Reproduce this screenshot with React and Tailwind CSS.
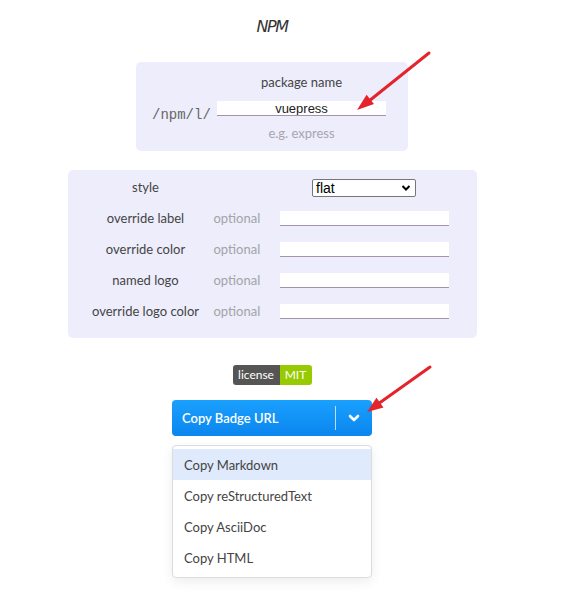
import React from 'react';

const fields = ['override label', 'override color', 'named logo', 'override logo color'];
const copyOptions = ['Copy Markdown', 'Copy reStructuredText', 'Copy AsciiDoc', 'Copy HTML'];

const App = () => {
  return (
    <div className="relative w-[566px] h-[608px] bg-white overflow-hidden font-[family-name:Lato,sans-serif]">
      <div className="w-[544px] flex flex-col items-center pt-[18px]">
        {/* TITLE */}
        <h1 className="text-[16px] leading-[18px] italic text-[#333] font-[family-name:'DejaVu_Sans',sans-serif] tracking-[-1.5px]">
          NPM
        </h1>

        {/* PATH PANEL */}
        <div className="mt-[26px] w-[272px] h-[89px] rounded-[5px] bg-[#eeedfc] flex items-start pl-[16px] pt-[10px]">
          <span className="mt-[35px] w-[58px] text-[14px] leading-[16px] text-[#666] font-[family-name:'Liberation_Mono',monospace]">
            /npm/l/
          </span>
          <div className="ml-[7px] w-[169px] flex flex-col items-center">
            <span className="text-[13px] leading-[20px] text-[#444]">package name</span>
            <input
              type="text"
              defaultValue="vuepress"
              className="block mt-[9px] w-[169px] h-[15px] bg-white border-b border-[#a592ad] text-center text-[13px] leading-[15px] text-[#222] font-[family-name:'Liberation_Sans',sans-serif] outline-none"
            />
            <span className="mt-[7px] text-[13px] leading-[20px] text-[#a6a6b0]">e.g. express</span>
          </div>
        </div>

        {/* OPTIONS PANEL */}
        <div className="mt-[19px] w-[409px] rounded-[5px] bg-[#eeedfc] pt-[2px] pb-[11px] pl-[13px]">
          <div className="grid grid-cols-[130px_69px_169px] h-[31px] items-center">
            <span className="text-center text-[13px] text-[#444]">style</span>
            <span />
            <div className="flex justify-center">
              <div className="relative w-[104px] h-[18px]">
                <select className="block appearance-none w-[104px] h-[18px] py-0 bg-white border border-[#767676] rounded-[2px] pl-[3px] text-[14px] leading-[16px] text-black font-[family-name:'Liberation_Sans',sans-serif] outline-none">
                  <option>flat</option>
                </select>
                <svg
                  className="absolute right-[5px] top-[5px] pointer-events-none"
                  width="10"
                  height="8"
                  viewBox="0 0 10 8"
                >
                  <path d="M1.5 2 L5 5.5 L8.5 2" fill="none" stroke="#000" strokeWidth="2" />
                </svg>
              </div>
            </div>
          </div>
          {fields.map((f) => (
            <div key={f} className="grid grid-cols-[130px_69px_169px] h-[31px] items-center">
              <span className="text-center text-[13px] text-[#444]">{f}</span>
              <span className="pl-[3px] text-[13px] text-[#a3a3a8]">optional</span>
              <input
                type="text"
                className="block w-[169px] h-[15px] bg-white border-b border-[#a592ad] outline-none"
              />
            </div>
          ))}
        </div>

        {/* BADGE */}
        <div className="mt-[27px] flex h-[20px] rounded-[3px] overflow-hidden text-white text-[12px] leading-[20px]">
          <span className="w-[47px] bg-[#555] text-center">license</span>
          <span className="w-[32px] bg-[#97ca00] text-center">MIT</span>
        </div>

        {/* COPY BUTTON */}
        <div className="mt-[15px] w-[200px] h-[36px] rounded-[4px] bg-gradient-to-b from-[#1aa0fd] to-[#0a86ef] flex items-center">
          <span className="flex-1 pl-[10px] pt-[2px] text-white text-[13px] font-semibold">Copy Badge URL</span>
          <span className="w-px h-[24px] bg-white/70" />
          <span className="w-[36px] flex justify-center">
            <svg width="12" height="9" viewBox="0 0 12 9">
              <path d="M2 2 L6 6 L10 2" fill="none" stroke="#fff" strokeWidth="2.6" strokeLinecap="round" strokeLinejoin="round" />
            </svg>
          </span>
        </div>

        {/* DROPDOWN */}
        <div className="mt-[9px] w-[200px] bg-white border border-[#dcdcdc] rounded-[4px] shadow-[0_4px_12px_rgba(0,0,0,0.07)] pt-[3px] pb-[4px]">
          {copyOptions.map((o, i) => (
            <div
              key={o}
              className={
                i === 0
                  ? 'h-[31px] pl-[11px] pt-[2px] flex items-center text-[13px] text-[#444] bg-[#dfeafc]'
                  : 'h-[31px] pl-[11px] pt-[2px] flex items-center text-[13px] text-[#444]'
              }
            >
              {o}
            </div>
          ))}
        </div>
      </div>

      {/* RED ARROWS */}
      <svg className="absolute inset-0 pointer-events-none" width="566" height="608" viewBox="0 0 566 608">
        <line x1="429" y1="53" x2="369" y2="101" stroke="#e3242b" strokeWidth="3" strokeLinecap="round" />
        <polygon points="357,110 374,104.1 366.6,94.7" fill="#e3242b" />
        <line x1="430" y1="367" x2="378" y2="404" stroke="#e3242b" strokeWidth="3" strokeLinecap="round" />
        <polygon points="367,412 383.5,407.6 376.5,397.8" fill="#e3242b" />
      </svg>
    </div>
  );
};

export default App;
